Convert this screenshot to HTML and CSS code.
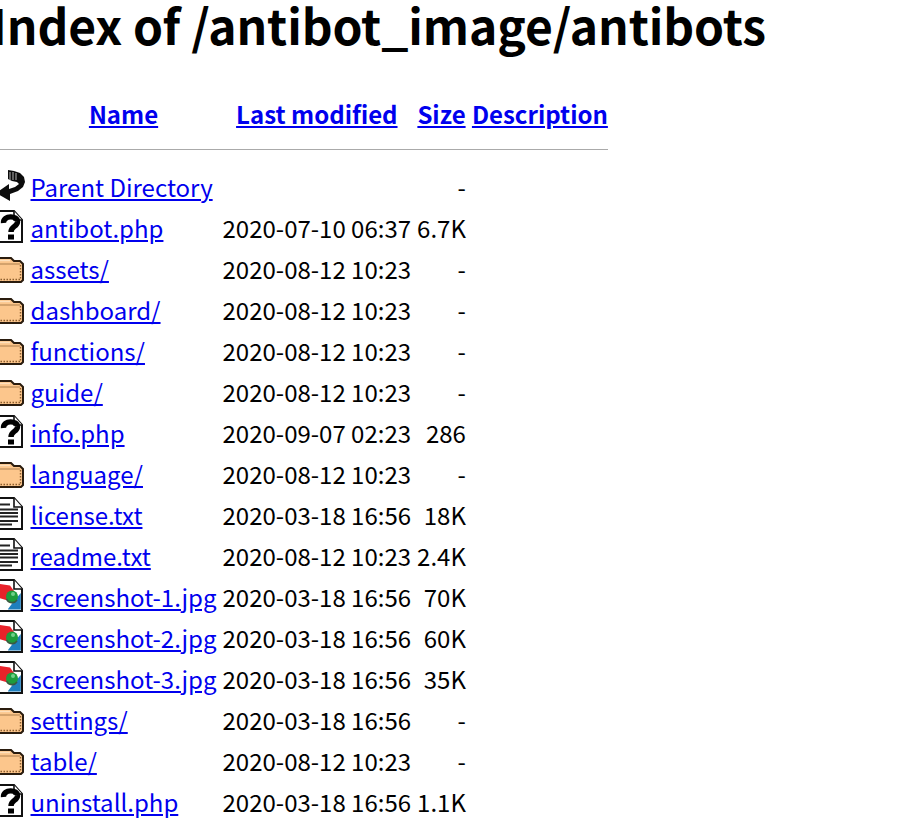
FILE: index.html
```html
<!DOCTYPE html>
<html>
<head>
<meta charset="utf-8">
<title>Index of /antibot_image/antibots</title>
<link rel="stylesheet" href="styles.css">
</head>
<body>
<svg class="defs" width="0" height="0" aria-hidden="true">
  <defs>
    <symbol id="i-back" viewBox="-5 0 30 33">
      <path d="M8 1 L14 2 L20 4 L24 8 L25 13 L23 18 L18 22 L10 25 L10 32 L-4 24 L9 15 L9 20 L15 18 L19 15 L17 13 L12 12 L8 10 Z" fill="#0c0c0c"/>
      <path d="M10 3v8M13 3v8M16 4v7" stroke="#9a9a9a" stroke-width="1.2"/>
    </symbol>
    <symbol id="i-doc" viewBox="-5 0 30 33">
      <path d="M-4 1 H14 L22 10 V32 H-4 Z" fill="#fff" stroke="#111" stroke-width="2"/>
      <path d="M14 1 V10 H22" fill="#fff" stroke="#111" stroke-width="1.6"/>
      <path d="M3.5 13 C3 5 18 5 17.5 12 C17 17 11 16 11 22" fill="none" stroke="#000" stroke-width="5.4"/>
      <rect x="8" y="24.5" width="6" height="5" fill="#000"/>
    </symbol>
    <symbol id="i-folder" viewBox="-5 0 30 33">
      <path d="M-4 7 H11 L14 10 H20 L23 13 V29 L21 31 H-4 Z" fill="#fcc68c" stroke="#2a1c0e" stroke-width="2"/>
      <path d="M-3 13 H20" stroke="#b98a58" stroke-width="1.2"/>
      <path d="M-3 9.5 H10" stroke="#fde0bd" stroke-width="1.4"/>
      <path d="M20.5 14 V28.5 H-3" fill="none" stroke="#8b5d2c" stroke-width="1.4" stroke-dasharray="1.5 1.5"/>
    </symbol>
    <symbol id="i-text" viewBox="-5 0 30 33">
      <path d="M-4 1 H14 L22 10 V32 H-4 Z" fill="#fff" stroke="#111" stroke-width="2"/>
      <path d="M14 1 V10 H22" fill="#fff" stroke="#111" stroke-width="1.6"/>
      <path d="M-3 7.5H10M-3 12.5H18M-3 16H18M-3 19.5H18M-3 24H18M-3 27.5H12" stroke="#222" stroke-width="1.8"/>
    </symbol>
    <symbol id="i-image" viewBox="-5 0 30 33">
      <path d="M-4 1 H14 L22 10 V32 H-4 Z" fill="#fff" stroke="#111" stroke-width="2"/>
      <path d="M14 1 V10 H22" fill="#fff" stroke="#111" stroke-width="1.6"/>
      <path d="M-3 4.5 L10 6.5 L14 12 L6 21 L-3 18.5 Z" fill="#e8222a"/>
      <path d="M8 30 L14 22 L20.8 14 V30.5 H8 Z" fill="#1f7fbd"/>
      <circle cx="12" cy="17.5" r="6" fill="#1d9c3c"/>
      <path d="M6.5 20 A6 6 0 0 0 17 21" fill="none" stroke="#3a5a40" stroke-width="1.6"/>
      <circle cx="13" cy="15" r="2" fill="#6fd08a"/>
    </symbol>
  </defs>
</svg>
<h1 class="title">Index of /antibot_image/antibots</h1>
<table class="listing">
  <tr class="head">
    <th class="icon-col"></th>
    <th><a href="#">Name</a></th>
    <th><a href="#">Last modified</a></th>
    <th><a href="#">Size</a></th>
    <th><a href="#">Description</a></th>
  </tr>
  <tr><th colspan="5" class="rule-cell"><hr class="rule"></th></tr>
  <tr><td class="icon-col"><svg class="icon"><use href="#i-back"/></svg></td><td><a href="#">Parent Directory</a></td><td></td><td class="size">-</td><td></td></tr>
  <tr><td class="icon-col"><svg class="icon"><use href="#i-doc"/></svg></td><td><a href="#">antibot.php</a></td><td>2020-07-10 06:37</td><td class="size">6.7K</td><td></td></tr>
  <tr><td class="icon-col"><svg class="icon"><use href="#i-folder"/></svg></td><td><a href="#">assets/</a></td><td>2020-08-12 10:23</td><td class="size">-</td><td></td></tr>
  <tr><td class="icon-col"><svg class="icon"><use href="#i-folder"/></svg></td><td><a href="#">dashboard/</a></td><td>2020-08-12 10:23</td><td class="size">-</td><td></td></tr>
  <tr><td class="icon-col"><svg class="icon"><use href="#i-folder"/></svg></td><td><a href="#">functions/</a></td><td>2020-08-12 10:23</td><td class="size">-</td><td></td></tr>
  <tr><td class="icon-col"><svg class="icon"><use href="#i-folder"/></svg></td><td><a href="#">guide/</a></td><td>2020-08-12 10:23</td><td class="size">-</td><td></td></tr>
  <tr><td class="icon-col"><svg class="icon"><use href="#i-doc"/></svg></td><td><a href="#">info.php</a></td><td>2020-09-07 02:23</td><td class="size">286</td><td></td></tr>
  <tr><td class="icon-col"><svg class="icon"><use href="#i-folder"/></svg></td><td><a href="#">language/</a></td><td>2020-08-12 10:23</td><td class="size">-</td><td></td></tr>
  <tr><td class="icon-col"><svg class="icon"><use href="#i-text"/></svg></td><td><a href="#">license.txt</a></td><td>2020-03-18 16:56</td><td class="size">18K</td><td></td></tr>
  <tr><td class="icon-col"><svg class="icon"><use href="#i-text"/></svg></td><td><a href="#">readme.txt</a></td><td>2020-08-12 10:23</td><td class="size">2.4K</td><td></td></tr>
  <tr><td class="icon-col"><svg class="icon"><use href="#i-image"/></svg></td><td><a href="#">screenshot-1.jpg</a></td><td>2020-03-18 16:56</td><td class="size">70K</td><td></td></tr>
  <tr><td class="icon-col"><svg class="icon"><use href="#i-image"/></svg></td><td><a href="#">screenshot-2.jpg</a></td><td>2020-03-18 16:56</td><td class="size">60K</td><td></td></tr>
  <tr><td class="icon-col"><svg class="icon"><use href="#i-image"/></svg></td><td><a href="#">screenshot-3.jpg</a></td><td>2020-03-18 16:56</td><td class="size">35K</td><td></td></tr>
  <tr><td class="icon-col"><svg class="icon"><use href="#i-folder"/></svg></td><td><a href="#">settings/</a></td><td>2020-03-18 16:56</td><td class="size">-</td><td></td></tr>
  <tr><td class="icon-col"><svg class="icon"><use href="#i-folder"/></svg></td><td><a href="#">table/</a></td><td>2020-08-12 10:23</td><td class="size">-</td><td></td></tr>
  <tr><td class="icon-col"><svg class="icon"><use href="#i-doc"/></svg></td><td><a href="#">uninstall.php</a></td><td>2020-03-18 16:56</td><td class="size">1.1K</td><td></td></tr>
</table>
</body>
</html>
```
FILE: styles.css
```css
html, body {
  overflow: hidden;
  height: 837px;
}
body {
  margin: -11px 0 0 -4px;
  font-family: "Noto Sans CJK SC", "Noto Sans", sans-serif;
  font-size: 24px;
  color: #000;
  background: #fff;
}
.defs {
  position: absolute;
}
.title {
  font-size: 48px;
  font-weight: 700;
  margin: 0 0 32px -5px;
  letter-spacing: -0.1px;
  white-space: nowrap;
}
.listing {
  border-collapse: separate;
  border-spacing: 3px;
  margin-left: -6px;
}
.listing td, .listing th {
  padding: 1.5px;
  white-space: nowrap;
  line-height: 35px;
}
.listing td {
  vertical-align: top;
}
.listing .icon-col {
  line-height: 0;
}
.size {
  text-align: right;
}
.icon {
  display: block;
  width: 30px;
  height: 33px;
}
.listing .rule-cell {
  line-height: normal;
}
.rule {
  border: 0;
  border-top: 1px solid #aaa;
  margin: 12px 0 13px;
}
a {
  color: #0000ee;
}
```
